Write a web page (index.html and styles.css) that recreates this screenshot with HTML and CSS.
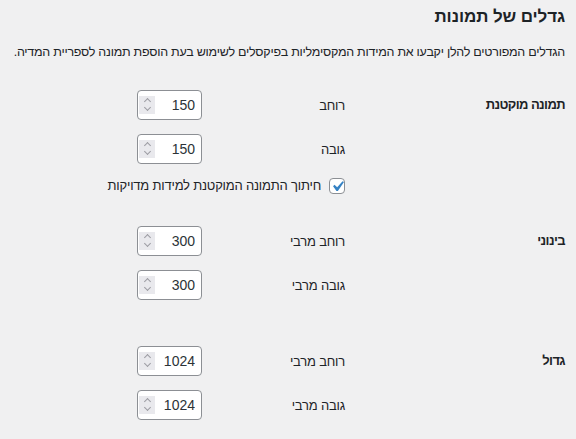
FILE: index.html
```html
<!DOCTYPE html>
<html lang="he" dir="rtl">
<head>
    <meta charset="UTF-8">
    <meta name="viewport" content="width=device-width, initial-scale=1.0">
    <title>הגדרות מדיה</title>
    <link rel="stylesheet" href="styles.css">
</head>
<body>
    <div class="wrap">
        <h2>גדלים של תמונות</h2>
        <p class="intro">הגדלים המפורטים להלן יקבעו את המידות המקסימליות בפיקסלים לשימוש בעת הוספת תמונה לספריית המדיה.</p>

        <div class="size-row">
            <div class="size-name">תמונה מוקטנת</div>
            <div class="size-values">
                <div class="size-field">
                    <label for="thumbnail_size_w">רוחב</label>
                    <span class="number-box">
                        <input type="number" id="thumbnail_size_w" value="150" min="0" step="1">
                        <span class="spin"><i class="up"></i><i class="down"></i></span>
                    </span>
                </div>
                <div class="size-field">
                    <label for="thumbnail_size_h">גובה</label>
                    <span class="number-box">
                        <input type="number" id="thumbnail_size_h" value="150" min="0" step="1">
                        <span class="spin"><i class="up"></i><i class="down"></i></span>
                    </span>
                </div>
                <div class="crop-row">
                    <span class="check">
                        <svg viewBox="0 0 20 20" width="21" height="21"><path d="M14.83 4.89l1.34.94-5.81 8.38H9.02L5.78 9.67l1.34-1.25 2.57 2.4z" fill="#3582c4"/></svg>
                    </span>
                    <label for="thumbnail_crop">חיתוך התמונה המוקטנת למידות מדויקות</label>
                </div>
            </div>
        </div>

        <div class="size-row">
            <div class="size-name">בינוני</div>
            <div class="size-values">
                <div class="size-field">
                    <label for="medium_size_w">רוחב מרבי</label>
                    <span class="number-box">
                        <input type="number" id="medium_size_w" value="300" min="0" step="1">
                        <span class="spin"><i class="up"></i><i class="down"></i></span>
                    </span>
                </div>
                <div class="size-field">
                    <label for="medium_size_h">גובה מרבי</label>
                    <span class="number-box">
                        <input type="number" id="medium_size_h" value="300" min="0" step="1">
                        <span class="spin"><i class="up"></i><i class="down"></i></span>
                    </span>
                </div>
            </div>
        </div>

        <div class="size-row">
            <div class="size-name">גדול</div>
            <div class="size-values">
                <div class="size-field">
                    <label for="large_size_w">רוחב מרבי</label>
                    <span class="number-box">
                        <input type="number" id="large_size_w" value="1024" min="0" step="1">
                        <span class="spin"><i class="up"></i><i class="down"></i></span>
                    </span>
                </div>
                <div class="size-field">
                    <label for="large_size_h">גובה מרבי</label>
                    <span class="number-box">
                        <input type="number" id="large_size_h" value="1024" min="0" step="1">
                        <span class="spin"><i class="up"></i><i class="down"></i></span>
                    </span>
                </div>
            </div>
        </div>
    </div>
</body>
</html>
```

FILE: styles.css
```css
body {
    background-color: #f0f0f1;
    font-family: "Liberation Sans", Arial, sans-serif;
    font-size: 13px;
    letter-spacing: -0.2px;
    color: #1d2327;
    margin: 0;
    padding: 0;
}

.wrap {
    padding: 6px 11px 0 8px;
}

h2 {
    font-size: 17px;
    font-weight: 700;
    line-height: 22px;
    letter-spacing: -0.1px;
    margin: 0;
}

.intro {
    margin: 14px 0 13px;
    font-size: 12.5px;
    line-height: 20px;
    letter-spacing: -0.25px;
    white-space: nowrap;
}

/* One row per image size: name on the right, fields on the left */
.size-row {
    display: flex;
}

.size-name {
    width: 200px;
    padding: 21px 0 20px 10px;
    font-weight: 700;
    line-height: 17px;
    letter-spacing: -0.6px;
}

.size-values {
    padding: 15px 10px 17px;
}

.size-field {
    display: flex;
    align-items: center;
    margin-bottom: 14px;
}

.size-field label {
    width: 143px;
}

/* Number input with its spinner drawn on the left side */
.number-box {
    box-sizing: border-box;
    display: flex;
    align-items: center;
    width: 65px;
    height: 30px;
    padding: 0 6px 0 1px;
    border: 1px solid #8c8f94;
    border-radius: 4px;
    background-color: #fff;
}

.number-box input {
    flex: 1;
    min-width: 0;
    height: 100%;
    margin: 0;
    padding: 0;
    border: none;
    background: transparent;
    color: #2c3338;
    font-family: "Liberation Sans", Arial, sans-serif;
    font-size: 14px;
    letter-spacing: 0;
    text-align: right;
    outline: none;
    -moz-appearance: textfield;
}

.number-box input::-webkit-inner-spin-button,
.number-box input::-webkit-outer-spin-button {
    -webkit-appearance: none;
    margin: 0;
}

.spin {
    order: 2;
    display: flex;
    flex-direction: column;
    align-items: center;
    justify-content: center;
    gap: 4px;
    width: 16px;
    height: 18px;
    background-color: #e9e9ed;
}

.spin i {
    display: block;
    width: 4px;
    height: 4px;
    border-left: 1px solid #9d9da3;
    border-top: 1px solid #9d9da3;
}

.spin .up {
    transform: translateY(1px) rotate(45deg);
}

.spin .down {
    transform: translateY(-2px) rotate(-135deg);
}

/* Crop checkbox */
.crop-row {
    display: flex;
    align-items: center;
    gap: 8px;
    margin-top: 3px;
    height: 16px;
    line-height: 16px;
}

.check {
    box-sizing: border-box;
    width: 16px;
    height: 16px;
    border: 1px solid #8c8f94;
    border-radius: 4px;
    background-color: #fff;
}

.check svg {
    display: block;
    margin: -3px -4px 0 0;
}
```
